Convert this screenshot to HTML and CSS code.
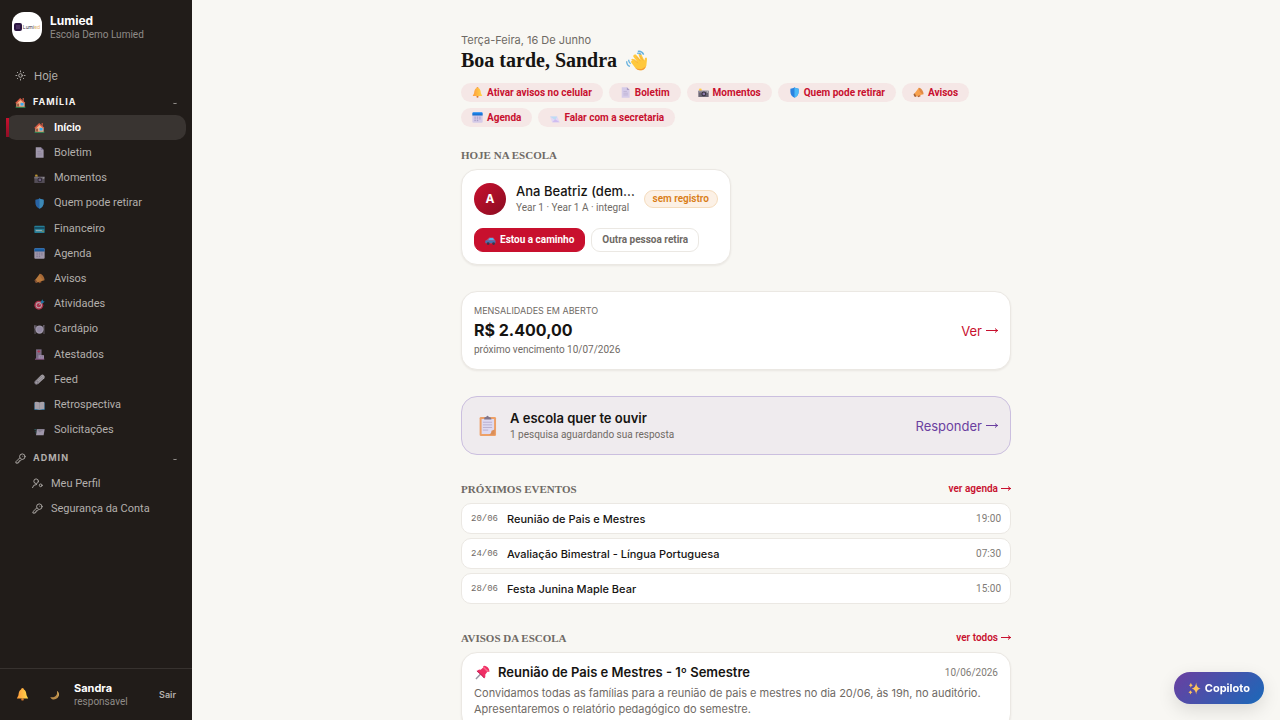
FILE: index.html
```html
<!DOCTYPE html>
<html lang="pt-BR">
<head>
    <meta charset="UTF-8">
    <meta name="viewport" content="width=device-width, initial-scale=1.0">
    <title>Início - Lumied</title>
    <link rel="stylesheet" href="styles.css">
</head>
<body>
    <svg class="sprite" aria-hidden="true">
        <defs>
            <linearGradient id="gold" x1="0" x2="1"><stop offset="0" stop-color="#ff9a3c"/><stop offset="1" stop-color="#ffd84a"/></linearGradient>
            <linearGradient id="blue" x1="0" y1="0" x2="0" y2="1"><stop offset="0" stop-color="#1b8cf5"/><stop offset="1" stop-color="#1769c4"/></linearGradient>
        </defs>
        <symbol id="house" viewBox="0 0 32 32">
            <path d="M2 28h28v3H2z" fill="#2fa866"/>
            <path d="M4 16 15 6l13 10v12H4z" fill="#f5b48a"/>
            <path d="M22 3h4v9l-4-3z" fill="#b4533e"/>
            <path d="M1 17 15 3l15 14-3 2L16 9 4 20z" fill="#d65b45"/>
            <path d="M6 19h6v9H6z" fill="#9a5a41"/>
            <path d="M16 17h9v8h-9z" fill="#35a8f0"/>
        </symbol>
        <symbol id="page" viewBox="0 0 32 32">
            <path d="M5 1h15l8 8v22H5z" fill="#d5cbe8"/>
            <path d="M20 1v8h8z" fill="#a99bc4"/>
            <path d="M10 13h10M10 18h13M10 23h13" stroke="#b9add0" stroke-width="2"/>
        </symbol>
        <symbol id="camera" viewBox="0 0 32 32">
            <path d="M6 3l2 3 3-1-1 3 2 2-4 1H3l1-3-2-2 3-1z" fill="#ffc83d"/>
            <path d="M1 11h30v18H1z" fill="#6a6473"/>
            <path d="M1 11h30v5H1z" fill="#98929f"/>
            <circle cx="17" cy="20" r="7" fill="#35303d"/>
            <circle cx="17" cy="20" r="4" fill="#8b7aa9"/>
            <path d="M26 13h3v3h-3z" fill="#ddd"/>
        </symbol>
        <symbol id="shield" viewBox="0 0 32 32">
            <path d="M16 1c4 3 8 4 12 4v9c0 9-5 14-12 17C9 28 4 23 4 14V5c4 0 8-1 12-4z" fill="#2b82e0"/>
            <path d="M16 1c4 3 8 4 12 4v9c0 9-5 14-12 17z" fill="#4ab8f7"/>
        </symbol>
        <symbol id="credit" viewBox="0 0 32 32">
            <rect x="1" y="8" width="30" height="21" rx="2" fill="#27a6cb"/>
            <path d="M1 12h30v5H1z" fill="#155e7d"/>
            <path d="M5 20h18v4H5z" fill="#bfeaf2"/>
            <circle cx="26" cy="24" r="2" fill="#ffc83d"/>
        </symbol>
        <symbol id="calendar" viewBox="0 0 32 32">
            <rect x="1" y="1" width="30" height="30" rx="3" fill="#d5cbe8"/>
            <path d="M1 10V4q0-3 3-3h24q3 0 3 3v6z" fill="url(#blue)"/>
            <path d="M7 15h4m3 0h4m3 0h4M7 20h4m3 0h4m3 0h4M7 25h4m3 0h4" stroke="#8f83b4" stroke-width="2"/>
        </symbol>
        <symbol id="horn" viewBox="0 0 32 32">
            <path d="M11 24l4 6 7-3-2-6z" fill="#b76532"/>
            <path d="M2 22 17 2l13 19-24 7z" fill="#f8a14d"/>
            <path d="M17 2c6-1 16 14 13 19-6 1-15-13-13-19z" fill="#e08a45"/>
            <path d="M2 22q0-3 3-3l5 8-4 2q-4-2-4-7z" fill="#a4643f"/>
        </symbol>
        <symbol id="target" viewBox="0 0 32 32">
            <circle cx="14" cy="18" r="13" fill="#e4375b"/>
            <circle cx="14" cy="18" r="9" fill="#f4d7e5"/>
            <circle cx="14" cy="18" r="6" fill="#e4375b"/>
            <path d="M14 18 26 6" stroke="#f4d7e5" stroke-width="2"/>
            <path d="M20 7l5-6 1 5 5 1-6 6-5-1z" fill="#219bdc"/>
        </symbol>
        <symbol id="plate" viewBox="0 0 32 32">
            <circle cx="16" cy="16" r="12" fill="#d5cbe8"/>
            <circle cx="16" cy="16" r="8" fill="#c3b7dd"/>
            <path d="M3 3v26M1 4v8h5V4M29 3v26m0-26q-4 4-2 14h2" fill="none" stroke="#a99fb7" stroke-width="2"/>
        </symbol>
        <symbol id="hospital" viewBox="0 0 32 32">
            <path d="M6 1h16v28H6z" fill="#a491b5"/>
            <path d="M13 18h16v11H13z" fill="#d5bfea"/>
            <path d="M14 3v8m-4-4h8" stroke="#e44770" stroke-width="3"/>
            <path d="M9 15h3m3 0h4M9 20h3m6 3h3m2 0h3" stroke="#8a78a8" stroke-width="2"/>
            <path d="M3 28h27v3H3z" fill="#c07ac4"/>
        </symbol>
        <symbol id="roll" viewBox="0 0 32 32">
            <path d="M2 22 21 3q4-3 8 1t1 8L11 30z" fill="#dad5de"/>
            <path d="M8 19 24 5m-12 18L28 9" stroke="#a19caa" stroke-width="2"/>
            <circle cx="7" cy="25" r="6" fill="#a49daf"/>
            <circle cx="7" cy="25" r="3" fill="#d9d4de"/>
        </symbol>
        <symbol id="book" viewBox="0 0 32 32">
            <path d="M1 8h30v21H1z" fill="#1e8bd0"/>
            <path d="M2 6q8-2 14 1 6-3 14-1v21q-8-1-14 1-6-2-14-1z" fill="#dfd9e6"/>
            <path d="M16 7v20" stroke="#aba3b8" stroke-width="1"/>
        </symbol>
        <symbol id="mail" viewBox="0 0 32 32">
            <path d="M8 12h23l-3 18H6z" fill="#d5cbe8"/>
            <path d="m8 12 8 10 15-10" fill="#b6acc9"/>
            <path d="M1 13h6m-5 5h5m-3 5h3" stroke="#358d94" stroke-width="2"/>
        </symbol>
        <symbol id="letter" viewBox="0 0 32 32">
            <path d="M3 13h21l7 17H9z" fill="#e2d8f6"/>
            <path d="m3 13 15 10 6-10" fill="#bddcf3"/>
            <path d="m9 30 9-9 13 9z" fill="#cfbdf0"/>
        </symbol>
        <symbol id="bell" viewBox="0 0 32 32">
            <circle cx="16" cy="28" r="3" fill="#d9772e"/>
            <circle cx="16" cy="3" r="3" fill="#f4a13c"/>
            <path d="M16 3c7 0 9 6 10 15l4 8H2l4-8C7 9 9 3 16 3z" fill="url(#gold)"/>
        </symbol>
        <symbol id="moon" viewBox="0 0 32 32">
            <path d="M22 2c14 12 3 30-12 28-5-1-8-4-9-8 13 4 25-5 21-20z" fill="#b98b48"/>
            <path d="M22 2q13 10 1 23 5-12-1-23z" fill="#d3ab5f"/>
        </symbol>
        <symbol id="wave" viewBox="0 0 32 32">
            <path d="M8 15q1-3 4-1l5 4-6-8q0-4 4-3l7 8-3-8q1-3 4-1l5 10 1-4q3-2 3 2l-1 10c-2 8-12 9-17 3l-6-8q-1-3 2-3z" fill="#ffc83d"/>
            <path d="M14 27q8 5 16-2c-2 7-11 8-16 2z" fill="#f59b37"/>
            <path d="m12 14 6 6m-2-10 6 7m-1-8 5 7" stroke="#f2a53a" stroke-width="1"/>
            <path d="M1 17q0 6 5 8M4 15q0 4 3 6M18 2q6-1 9 5M17 5q4-1 6 2" fill="none" stroke="#65b1de" stroke-width="2"/>
        </symbol>
        <symbol id="car" viewBox="0 0 32 32">
            <path d="M2 17 12 7h12l6 8v10H2z" fill="#b04e79"/>
            <path d="M9 15 14 9h9l4 6z" fill="#55b1e8"/>
            <path d="M1 16h29v7H1z" fill="#4872af"/>
            <circle cx="9" cy="25" r="4" fill="#38364d"/>
            <circle cx="25" cy="25" r="4" fill="#38364d"/>
        </symbol>
        <symbol id="clipboard" viewBox="0 0 32 32">
            <rect x="4" y="3" width="25" height="29" rx="2" fill="#eda068"/>
            <path d="M7 6h19v18l-6 5H7z" fill="#dedaf1"/>
            <path d="M18 30q4-1 4-6l5-2v8z" fill="#da8e58"/>
            <path d="M11 5q0-2 3-2 2-4 4 0 4 0 4 4H11z" fill="#81758a"/>
            <path d="M9 11h14M9 15h14M9 19h14M9 23h8" stroke="#a69abf" stroke-width="1"/>
        </symbol>
        <symbol id="pin" viewBox="0 0 32 32">
            <path d="M2 30 13 18" stroke="#9a94a4" stroke-width="3"/>
            <path d="M18 2q4-2 9 3t4 9l-5 1-4 5q1 5-2 8L4 13q3-4 8-3l5-4z" fill="#ee2e64"/>
            <path d="M18 2q6 7 13 12l-5 1L17 6z" fill="#f96a8c"/>
            <path d="M4 13q7 4 16 15" fill="none" stroke="#b91d55" stroke-width="2"/>
        </symbol>
        <symbol id="sparkle" viewBox="0 0 32 32">
            <path d="M20 1q1 13 11 15-10 2-11 15Q19 18 9 16 19 14 20 1zM7 2q1 5 5 6-4 1-5 6-1-5-5-6 4-1 5-6zM6 20q1 4 5 5-4 1-5 6-1-5-5-6 4-1 5-5z" fill="#ffc45a"/>
        </symbol>
        <symbol id="sun" viewBox="0 0 24 24">
            <g fill="none" stroke="currentColor" stroke-width="2" stroke-linecap="round"><circle cx="12" cy="12" r="4"/><path d="M12 2v2m0 16v2M2 12h2m16 0h2M5 5l1 1m12 12 1 1M5 19l1-1M18 6l1-1"/></g>
        </symbol>
        <symbol id="key" viewBox="0 0 24 24">
            <g fill="none" stroke="currentColor" stroke-width="2" stroke-linejoin="round" stroke-linecap="round"><path d="M10 11 2 19v3h5v-2h2v-3h3l2-2"/><circle cx="16" cy="8" r="6"/><path d="M17 7h0"/></g>
        </symbol>
        <symbol id="user" viewBox="0 0 24 24">
            <g fill="none" stroke="currentColor" stroke-width="2" stroke-linecap="round"><circle cx="9" cy="7" r="5"/><path d="M1 21q1-7 9-7"/><circle cx="19" cy="16" r="3"/></g>
        </symbol>
    </svg>

    <div class="app">
        <aside class="sidebar">
            <div class="brand">
                <div class="brand-logo"><span class="logo-mark"></span><span class="logo-text">Lumi<b>ed</b></span></div>
                <div class="brand-text">
                    <div class="brand-name">Lumied</div>
                    <div class="brand-school">Escola Demo Lumied</div>
                </div>
            </div>
            <nav>
                <a class="nav-top" href="#"><svg class="icon"><use href="#sun"/></svg>Hoje</a>
                <button class="nav-group open" type="button"><svg class="icon"><use href="#house"/></svg>FAMÍLIA<span class="chevron"></span></button>
                <div class="nav-list">
                    <a class="active" href="#"><svg class="icon"><use href="#house"/></svg>Início</a>
                    <a href="#"><svg class="icon"><use href="#page"/></svg>Boletim</a>
                    <a href="#"><svg class="icon"><use href="#camera"/></svg>Momentos</a>
                    <a href="#"><svg class="icon"><use href="#shield"/></svg>Quem pode retirar</a>
                    <a href="#"><svg class="icon"><use href="#credit"/></svg>Financeiro</a>
                    <a href="#"><svg class="icon"><use href="#calendar"/></svg>Agenda</a>
                    <a href="#"><svg class="icon"><use href="#horn"/></svg>Avisos</a>
                    <a href="#"><svg class="icon"><use href="#target"/></svg>Atividades</a>
                    <a href="#"><svg class="icon"><use href="#plate"/></svg>Cardápio</a>
                    <a href="#"><svg class="icon"><use href="#hospital"/></svg>Atestados</a>
                    <a href="#"><svg class="icon"><use href="#roll"/></svg>Feed</a>
                    <a href="#"><svg class="icon"><use href="#book"/></svg>Retrospectiva</a>
                    <a href="#"><svg class="icon"><use href="#mail"/></svg>Solicitações</a>
                </div>
                <button class="nav-group admin" type="button"><svg class="icon"><use href="#key"/></svg>ADMIN<span class="chevron"></span></button>
                <div class="nav-sub">
                    <a href="#"><svg class="icon"><use href="#user"/></svg>Meu Perfil</a>
                    <a href="#"><svg class="icon"><use href="#key"/></svg>Segurança da Conta</a>
                </div>
            </nav>
            <div class="user-bar">
                <button class="icon-btn" type="button" aria-label="Notificações"><svg class="bell"><use href="#bell"/></svg></button>
                <button class="icon-btn" type="button" aria-label="Tema escuro"><svg class="moon"><use href="#moon"/></svg></button>
                <div class="user-info">
                    <div class="user-name">Sandra</div>
                    <div class="user-role">responsavel</div>
                </div>
                <button class="logout" type="button">Sair</button>
            </div>
        </aside>

        <main>
            <div class="content">
                <p class="date">Terça-Feira, 16 De Junho</p>
                <h1>Boa tarde, Sandra <svg class="hand"><use href="#wave"/></svg></h1>
                <div class="chips">
                    <a class="chip" href="#"><svg class="icon"><use href="#bell"/></svg>Ativar avisos no celular</a>
                    <a class="chip" href="#"><svg class="icon"><use href="#page"/></svg>Boletim</a>
                    <a class="chip" href="#"><svg class="icon"><use href="#camera"/></svg>Momentos</a>
                    <a class="chip" href="#"><svg class="icon"><use href="#shield"/></svg>Quem pode retirar</a>
                    <a class="chip" href="#"><svg class="icon"><use href="#horn"/></svg>Avisos</a>
                    <a class="chip" href="#"><svg class="icon"><use href="#calendar"/></svg>Agenda</a>
                    <a class="chip" href="#"><svg class="icon"><use href="#letter"/></svg>Falar com a secretaria</a>
                </div>

                <section>
                    <div class="section-head"><h2>HOJE NA ESCOLA</h2></div>
                    <div class="students">
                        <div class="card">
                            <div class="student">
                                <div class="avatar">A</div>
                                <div class="student-info">
                                    <div class="title">Ana Beatriz (dem…</div>
                                    <div class="small">Year 1 · Year 1 A · integral</div>
                                </div>
                                <span class="badge">sem registro</span>
                            </div>
                            <div class="actions">
                                <button class="btn primary" type="button"><svg class="icon"><use href="#car"/></svg>Estou a caminho</button>
                                <button class="btn" type="button">Outra pessoa retira</button>
                            </div>
                        </div>
                    </div>
                </section>

                <section class="card row-card">
                    <div class="grow">
                        <div class="label">MENSALIDADES EM ABERTO</div>
                        <div class="amount">R$ 2.400,00</div>
                        <div class="small">próximo vencimento 10/07/2026</div>
                    </div>
                    <a class="go" href="#">Ver <span class="arrow"></span></a>
                </section>

                <section class="card row-card survey">
                    <svg class="clip"><use href="#clipboard"/></svg>
                    <div class="grow">
                        <div class="title">A escola quer te ouvir</div>
                        <div class="small">1 pesquisa aguardando sua resposta</div>
                    </div>
                    <a class="go" href="#">Responder <span class="arrow"></span></a>
                </section>

                <section>
                    <div class="section-head"><h2>PRÓXIMOS EVENTOS</h2><a href="#">ver agenda <span class="arrow short"></span></a></div>
                    <div class="events">
                        <div class="event"><span class="day">20/06</span><span class="grow">Reunião de Pais e Mestres</span><span class="time">19:00</span></div>
                        <div class="event"><span class="day">24/06</span><span class="grow">Avaliação Bimestral - Língua Portuguesa</span><span class="time">07:30</span></div>
                        <div class="event"><span class="day">28/06</span><span class="grow">Festa Junina Maple Bear</span><span class="time">15:00</span></div>
                    </div>
                </section>

                <section>
                    <div class="section-head"><h2>AVISOS DA ESCOLA</h2><a href="#">ver todos <span class="arrow short"></span></a></div>
                    <article class="card notice">
                        <div class="notice-head">
                            <svg class="pin"><use href="#pin"/></svg>
                            <h3 class="title grow">Reunião de Pais e Mestres - 1º Semestre</h3>
                            <span class="time">10/06/2026</span>
                        </div>
                        <p>Convidamos todas as famílias para a reunião de pais e mestres no dia 20/06, às 19h, no auditório. Apresentaremos o relatório pedagógico do semestre.</p>
                    </article>
                </section>
            </div>
        </main>
    </div>
    <button class="copilot" type="button"><svg class="spark"><use href="#sparkle"/></svg>Copiloto</button>
</body>
</html>
```
FILE: styles.css
```css
* {
    box-sizing: border-box;
}
body {
    margin: 0;
    background: #f8f7f3;
    color: #161412;
    font-family: Inter, "Open Sans", sans-serif;
    font-size: 11px;
    line-height: 16px;
}
a {
    color: inherit;
    text-decoration: none;
}
button {
    font: inherit;
    color: inherit;
    border: none;
    background: none;
    padding: 0;
    cursor: pointer;
}
h1, h2, h3, p {
    margin: 0;
}
.sprite {
    position: absolute;
    width: 0;
    height: 0;
}
.icon {
    width: 11px;
    height: 11px;
    flex: none;
}
.app {
    display: flex;
    height: 100vh;
}
.brand-school, .user-role, .nav-list, .nav-sub, .chip, .small, .badge, .btn, .time, .section-head a {
    font-family: Roboto, Inter, sans-serif;
}

/* sidebar */
.sidebar {
    width: 192px;
    flex: none;
    display: flex;
    flex-direction: column;
    background: #211c19;
    color: #b3afac;
}
.brand {
    display: flex;
    align-items: center;
    gap: 8px;
    padding: 12px 12px 20px;
    line-height: 14px;
}
.brand-logo {
    width: 30px;
    height: 30px;
    display: flex;
    align-items: center;
    justify-content: center;
    gap: 1px;
    border-radius: 12px;
    background: #fff;
}
.logo-mark {
    width: 8px;
    height: 8px;
    border-radius: 2px;
    background: #4a3060;
    border: 2px solid #2c1642;
}
.logo-text {
    font-size: 5px;
    line-height: 8px;
    color: #40364d;
}
.logo-text b {
    color: #e6b26b;
    font-weight: 400;
}
.brand-text {
    padding-top: 2px;
}
.brand-name {
    font-size: 12px;
    font-weight: 700;
    color: #fff;
}
.brand-school {
    font-size: 10px;
    color: #8f8b88;
}
nav {
    flex: 1;
    padding: 0 6px;
}
.nav-top {
    display: flex;
    align-items: center;
    gap: 8px;
    height: 27px;
    padding-left: 9px;
}
.nav-group {
    display: flex;
    align-items: center;
    gap: 7px;
    width: 100%;
    height: 26px;
    padding: 0 9px;
    font-size: 9px;
    font-weight: 700;
    letter-spacing: 1px;
}
.nav-group.open {
    color: #f4f2f0;
}
.nav-group.admin {
    margin-top: 2px;
}
.chevron {
    width: 4px;
    height: 3px;
    margin-left: auto;
    border-bottom: 1px solid #8f8b88;
    border-radius: 2px;
}
.nav-list {
    display: grid;
    grid-auto-rows: 1fr;
    min-height: 328px;
}
.nav-list a {
    position: relative;
    display: flex;
    align-items: center;
    gap: 9px;
    padding-left: 28px;
    border-radius: 10px;
}
.nav-list .icon {
    opacity: 0.7;
}
.nav-list .active {
    background: #393431;
    color: #fff;
    font-weight: 600;
}
.nav-list .active .icon {
    opacity: 1;
}
.active::before {
    content: "";
    position: absolute;
    left: 0;
    top: 3px;
    bottom: 3px;
    width: 3px;
    background: linear-gradient(#c8102e, #8f0e25);
}
.nav-sub a {
    display: flex;
    align-items: center;
    gap: 8px;
    height: 25px;
    padding-left: 26px;
}
.user-bar {
    display: flex;
    align-items: center;
    height: 52px;
    padding: 0 16px;
    border-top: 1px solid #37322f;
}
.icon-btn {
    display: flex;
    width: 29px;
}
.bell {
    width: 13px;
    height: 13px;
}
.moon {
    width: 10px;
    height: 10px;
    margin-left: 5px;
}
.user-info {
    flex: 1;
    line-height: 14px;
}
.user-name {
    font-size: 11px;
    font-weight: 700;
    color: #fff;
}
.user-role {
    font-size: 10px;
    color: #8f8b88;
}
.logout {
    font-size: 9px;
    font-weight: 600;
}

/* page */
main {
    flex: 1;
    min-width: 0;
    overflow-y: auto;
    scrollbar-width: none;
    padding: 32px 20px;
}
.content {
    max-width: 550px;
    margin: 0 auto;
}
.date {
    color: #6f6a65;
}
h1 {
    display: flex;
    align-items: center;
    gap: 9px;
    font-family: "Liberation Serif", serif;
    font-size: 20px;
    line-height: 25px;
}
.hand {
    width: 21px;
    height: 21px;
}
.chips {
    display: flex;
    flex-wrap: wrap;
    gap: 6px;
    margin: 10px 0 20px;
}
.chip {
    display: flex;
    align-items: center;
    gap: 4px;
    height: 19px;
    padding: 0 11px;
    border-radius: 10px;
    background: #f5e7e6;
    color: #c8102e;
    font-size: 10px;
    font-weight: 700;
}
.section-head {
    display: flex;
    align-items: center;
    justify-content: space-between;
    height: 15px;
    margin-bottom: 7px;
}
h2 {
    font-family: "Liberation Serif", serif;
    font-size: 11px;
    color: #6f6a65;
}
.section-head a {
    display: flex;
    align-items: center;
    gap: 3px;
    color: #c8102e;
    font-size: 10px;
    font-weight: 600;
}
section {
    margin-bottom: 26px;
}
.students {
    display: grid;
    grid-template-columns: repeat(2, minmax(0, 1fr));
    gap: 10px;
}
.card {
    padding: 12px;
    border: 1px solid #ebe8e3;
    border-radius: 16px;
    background: #fff;
    box-shadow: 0 1px 2px rgba(60, 40, 20, 0.08);
}
.student {
    display: flex;
    align-items: center;
    gap: 10px;
}
.avatar {
    width: 32px;
    height: 32px;
    flex: none;
    border-radius: 50%;
    background: linear-gradient(135deg, #c8102e, #8a0d22);
    color: #fff;
    font-size: 12px;
    font-weight: 700;
    line-height: 32px;
    text-align: center;
}
.student-info {
    flex: 1;
    min-width: 0;
}
.title {
    font-size: 13px;
    font-weight: 500;
    line-height: 19px;
    white-space: nowrap;
}
.small {
    font-size: 10px;
    line-height: 14px;
    color: #6f6a65;
}
.badge {
    padding: 0 8px;
    border: 1px solid #f5dcbd;
    border-radius: 9px;
    background: #fcf1e6;
    color: #d97d16;
    font-size: 10px;
    font-weight: 600;
    white-space: nowrap;
}
.actions {
    display: flex;
    gap: 6px;
    margin-top: 13px;
}
.btn {
    display: flex;
    align-items: center;
    gap: 4px;
    height: 24px;
    padding: 0 10px;
    border: 1px solid #ebe8e3;
    border-radius: 9px;
    color: #6f6a65;
    font-size: 10px;
    font-weight: 700;
}
.primary {
    border-color: #c8102e;
    background: #c8102e;
    color: #fff;
}
.row-card {
    display: flex;
    align-items: center;
}
.grow {
    flex: 1;
}
.label {
    font-size: 9px;
    line-height: 14px;
    color: #6f6a65;
}
.amount {
    font-size: 16px;
    font-weight: 700;
    line-height: 25px;
}
.go {
    display: flex;
    align-items: center;
    gap: 4px;
    color: #c8102e;
    font-size: 13px;
}
.arrow {
    position: relative;
    width: 12px;
    height: 1px;
    background: currentColor;
}
.arrow::after {
    content: "";
    position: absolute;
    right: 0;
    top: -2px;
    width: 5px;
    height: 5px;
    background: currentColor;
    clip-path: polygon(40% 0, 100% 50%, 40% 100%, 40% 80%, 75% 50%, 40% 20%);
}
.arrow.short {
    width: 10px;
}
.survey {
    border-color: #cbbfdf;
    background: #efebee;
    box-shadow: none;
}
.survey .go {
    color: #6b3fa0;
}
.clip {
    width: 21px;
    height: 21px;
    margin: 0 12px 0 3px;
}
.events {
    display: grid;
    gap: 4px;
}
.event {
    display: flex;
    align-items: center;
    gap: 9px;
    height: 31px;
    padding: 0 9px;
    border: 1px solid #ebe8e3;
    border-radius: 10px;
    background: #fff;
    font-weight: 500;
}
.day {
    font-family: "Liberation Mono", monospace;
    font-size: 9px;
    color: #6f6a65;
}
.time {
    font-size: 10px;
    font-weight: 400;
    color: #807b76;
}
.notice {
    padding-top: 10px;
}
.notice-head {
    display: flex;
    align-items: center;
    gap: 8px;
    margin-bottom: 3px;
}
.notice-head .title {
    font-weight: 600;
}
.survey .title {
    font-weight: 600;
}
.pin {
    width: 15px;
    height: 15px;
    margin-left: 1px;
}
.notice p {
    color: #6f6a65;
}
.copilot {
    position: fixed;
    right: 16px;
    bottom: 16px;
    display: flex;
    align-items: center;
    gap: 4px;
    height: 32px;
    padding: 0 14px;
    border-radius: 16px;
    background: linear-gradient(135deg, #6b3fa0, #1a69b9);
    box-shadow: 0 6px 18px rgba(0, 0, 0, 0.12);
    color: #fff;
    font-weight: 700;
}
.spark {
    width: 13px;
    height: 13px;
}
```
